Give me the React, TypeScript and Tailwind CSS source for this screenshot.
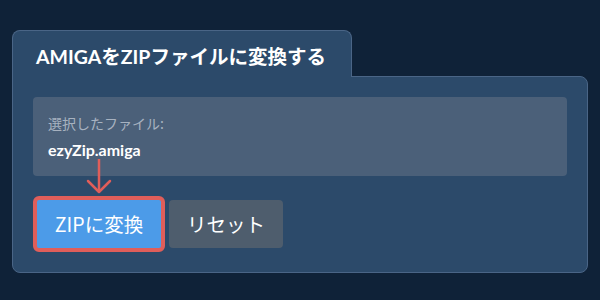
import React from 'react';

const latin = { fontFamily: "Lato, 'Noto Sans CJK JP', sans-serif" };
const cjk = { fontFamily: "'Noto Sans CJK JP', 'Noto Sans', sans-serif" };

export default function App() {
  return (
    <div className="relative w-[600px] h-[300px] bg-[#0f2238] px-3 pt-[30px]" style={latin}>
      {/* Tab */}
      <div className="relative z-10 -mb-px w-[340px] h-[47px] rounded-t-lg border border-b-0 border-[#4a6586] bg-[#2c4a6a] pl-[23px] pt-[12px]">
        <h1 className="text-[19.5px] leading-[28px] font-bold text-white">AMIGAをZIPファイルに変換する</h1>
      </div>

      {/* Panel */}
      <div className="h-[197px] rounded-b-lg rounded-tr-lg border border-[#4a6586] bg-[#2c4a6a] p-5">
        <div className="h-[79px] rounded bg-[#4b6079] px-[15px] pt-4">
          <div className="text-[14px] leading-5 text-[#a7b2c0]" style={cjk}>選択したファイル:</div>
          <div className="mt-[7px] text-[16px] leading-5 font-bold text-white">ezyZip.amiga</div>
        </div>

        <div className="mt-5 flex items-center gap-1">
          <button className="h-[56px] w-[132px] rounded-md border-4 border-[#e05e5a] bg-[#4c9be8] text-[19.5px] text-white" style={cjk}>
            ZIPに変換
          </button>
          <button className="h-[48px] w-[114px] rounded bg-[#4e5d6d] text-[19.5px] text-white" style={cjk}>
            リセット
          </button>
        </div>
      </div>

      {/* Annotation arrow */}
      <svg className="absolute left-[86px] top-[158px]" width="26" height="37" viewBox="0 0 26 37" fill="none">
        <line x1="13" y1="1" x2="13" y2="34" stroke="#e05e5a" strokeWidth="2.5" />
        <polyline points="2,23 13,34 24,23" stroke="#e05e5a" strokeWidth="2.5" strokeLinecap="round" strokeLinejoin="round" />
      </svg>
    </div>
  );
}
